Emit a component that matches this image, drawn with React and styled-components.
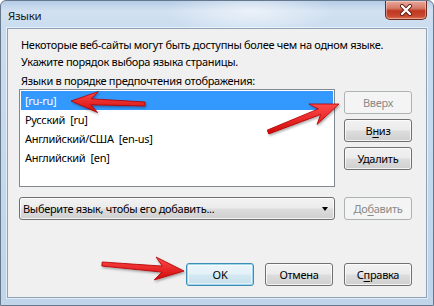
import React from 'react';
import styled, { createGlobalStyle, css } from 'styled-components';

const Global = createGlobalStyle`
  html, body { margin: 0; padding: 0; background: #fff; }
  body {
    width: 434px; height: 306px; overflow: hidden;
    font-family: "Noto Sans", "Open Sans", "DejaVu Sans", sans-serif;
    font-size: 11px;
    letter-spacing: -0.3px;
  }
`;

const Window = styled.div`
  position: relative;
  box-sizing: border-box;
  width: 434px;
  height: 306px;
  border: 1px solid #66788c;
  border-radius: 6px 6px 0 0;
  background:
    radial-gradient(ellipse 120px 40px at 250px 10px, rgba(255,255,255,0.55), rgba(255,255,255,0) 70%),
    linear-gradient(180deg, #b4cce6 0px, #d2e1f1 10px, #cadcef 27px, #c0d5ea 100%);
  display: flex;
  flex-direction: column;
  padding: 0 6px 7px 6px;
`;

const TitleBar = styled.div`
  height: 27px;
  display: flex;
  align-items: flex-start;
  flex-shrink: 0;
`;

const Title = styled.div`
  margin: 7px 0 0 1px;
  font-size: 11.5px;
  line-height: 16px;
  color: #1a1a1a;
`;

const CloseButton = styled.div`
  margin-left: auto;
  width: 42px;
  height: 19px;
  box-sizing: border-box;
  border: 1px solid #6d2a22;
  border-top: none;
  border-radius: 0 0 5px 5px;
  background: linear-gradient(180deg, #e9a99b 0%, #d67a68 40%, #c1371f 55%, #c94a32 85%, #e07a58 100%);
  box-shadow: inset 0 0 0 1px rgba(255,255,255,0.35);
  display: flex;
  align-items: center;
  justify-content: center;
`;

const Panel = styled.div`
  flex: 1;
  display: flex;
  flex-direction: column;
  background: #f0f0f0;
  border: 1px solid #8da1b7;
  box-shadow: 0 0 0 1px rgba(255,255,255,0.55);
  padding: 7px 14px 11px 11px;
  color: #000;
`;

const Description = styled.div`
  line-height: 17px;
  padding-left: 2px;
  white-space: nowrap;
`;

const Label = styled.div`
  margin-top: 2px;
  line-height: 17px;
  padding-left: 2px;
  white-space: nowrap;
`;

const ListRow = styled.div`
  display: flex;
  gap: 9px;
  height: 98px;
`;

const ListBox = styled.div`
  flex: 1;
  box-sizing: border-box;
  background: #fff;
  border: 1px solid #828790;
  padding: 1px;
`;

const ListItem = styled.div`
  height: 19px;
  line-height: 19px;
  padding-left: 4px;
  white-space: pre;
  ${p => p.$selected && css`
    background: #3399ff;
    color: #fff;
  `}
`;

const SideColumn = styled.div`
  width: 68px;
  display: flex;
  flex-direction: column;
  gap: 5px;
  padding-top: 2px;
`;

const Button = styled.div`
  box-sizing: border-box;
  width: 68px;
  height: 23px;
  display: flex;
  align-items: center;
  justify-content: center;
  border: 1px solid #707070;
  border-radius: 3px;
  background: linear-gradient(180deg, #f2f2f2 0%, #ebebeb 48%, #dddddd 52%, #cfcfcf 100%);
  box-shadow: inset 0 0 0 1px rgba(255,255,255,0.75);
  color: #000;
  ${p => p.$disabled && css`
    border-color: #adb2b5;
    background: #f4f4f4;
    box-shadow: none;
    color: #8a8a8a;
  `}
  ${p => p.$default && css`
    border-color: #3c8db5;
    background: linear-gradient(180deg, #eaf6fb 0%, #e3f1f8 48%, #d3e8f2 52%, #c6dfec 100%);
    box-shadow: inset 0 0 0 1px #9fd6ee, inset 0 0 0 2px rgba(255,255,255,0.5);
  `}
`;

const Mnemonic = styled.span`
  text-decoration: underline;
  text-underline-offset: 2px;
`;

const AddRow = styled.div`
  margin-top: 10px;
  display: flex;
  gap: 9px;
  height: 23px;
`;

const Combo = styled.div`
  flex: 1;
  box-sizing: border-box;
  display: flex;
  align-items: center;
  padding: 0 6px 0 3px;
  border: 1px solid #707070;
  border-radius: 3px;
  background: linear-gradient(180deg, #f2f2f2 0%, #ebebeb 48%, #dddddd 52%, #cfcfcf 100%);
  box-shadow: inset 0 0 0 1px rgba(255,255,255,0.75);
`;

const ComboText = styled.span`
  flex: 1;
  white-space: nowrap;
`;

const ComboArrow = styled.span`
  width: 0;
  height: 0;
  border-left: 3.5px solid transparent;
  border-right: 3.5px solid transparent;
  border-top: 4px solid #000;
`;

const Footer = styled.div`
  margin-top: auto;
  display: flex;
  justify-content: flex-end;
  gap: 11px;
`;

const Overlay = styled.svg`
  position: absolute;
  left: -1px;
  top: -1px;
  width: 434px;
  height: 306px;
  pointer-events: none;
`;

function arrowPoints(tx, ty, px, py, tailW, shaftW, headLen, headHalf) {
  const dx = px - tx, dy = py - ty;
  const L = Math.hypot(dx, dy);
  const ux = dx / L, uy = dy / L;
  const nx = -uy, ny = ux;
  const bx = px - ux * headLen, by = py - uy * headLen;
  const p = (x, y) => `${x.toFixed(1)},${y.toFixed(1)}`;
  return [
    p(tx + nx * tailW / 2, ty + ny * tailW / 2),
    p(bx + ux * 4 + nx * shaftW / 2, by + uy * 4 + ny * shaftW / 2),
    p(bx - ux * 3 + nx * headHalf, by - uy * 3 + ny * headHalf),
    p(px, py),
    p(bx - ux * 3 - nx * headHalf, by - uy * 3 - ny * headHalf),
    p(bx + ux * 4 - nx * shaftW / 2, by + uy * 4 - ny * shaftW / 2),
    p(tx - nx * tailW / 2, ty - ny * tailW / 2),
  ].join(' ');
}

const arrows = [
  [145, 104, 71, 101, 4, 6, 24, 10.5],
  [268, 132, 339, 104, 4, 6, 25, 11],
  [102, 264, 184, 271, 4, 6, 26, 11.5],
];

function Arrows() {
  return (
    <Overlay viewBox="0 0 434 306">
      <defs>
        <linearGradient id="ar" x1="0" y1="0" x2="0" y2="1">
          <stop offset="0" stopColor="#ff4a4a" />
          <stop offset="1" stopColor="#d10a0a" />
        </linearGradient>
        <filter id="sh" x="-20%" y="-50%" width="140%" height="200%">
          <feDropShadow dx="1" dy="1.5" stdDeviation="1.2" floodColor="#000" floodOpacity="0.35" />
        </filter>
      </defs>
      {arrows.map((a, i) => (
        <polygon
          key={i}
          points={arrowPoints(...a)}
          fill="url(#ar)"
          stroke="#b00000"
          strokeWidth="0.8"
          strokeLinejoin="round"
          filter="url(#sh)"
        />
      ))}
    </Overlay>
  );
}

const items = ['[ru-ru]', 'Русский  [ru]', 'Английский/США  [en-us]', 'Английский  [en]'];

export default function App() {
  return (
    <>
      <Global />
      <Window>
        <TitleBar>
          <Title>Языки</Title>
          <CloseButton>
            <svg width="14" height="12" viewBox="0 0 14 12">
              <path d="M3 2 L11 10 M11 2 L3 10" stroke="#5a1a10" strokeWidth="4" strokeLinecap="round" />
              <path d="M3 2 L11 10 M11 2 L3 10" stroke="#fff" strokeWidth="2.4" strokeLinecap="round" />
            </svg>
          </CloseButton>
        </TitleBar>
        <Panel>
          <Description>
            Некоторые веб-сайты могут быть доступны более чем на одном языке.<br />
            Укажите порядок выбора языка страницы.
          </Description>
          <Label>Языки в порядке предпочтения отображения:</Label>
          <ListRow>
            <ListBox>
              {items.map((t, i) => (
                <ListItem key={t} $selected={i === 0}>{t}</ListItem>
              ))}
            </ListBox>
            <SideColumn>
              <Button $disabled>Вверх</Button>
              <Button>В<Mnemonic>н</Mnemonic>из</Button>
              <Button>Удалить</Button>
            </SideColumn>
          </ListRow>
          <AddRow>
            <Combo>
              <ComboText>Выберите язык, чтобы его добавить...</ComboText>
              <ComboArrow />
            </Combo>
            <Button $disabled>До<Mnemonic>б</Mnemonic>авить</Button>
          </AddRow>
          <Footer>
            <Button $default>OK</Button>
            <Button>Отмена</Button>
            <Button>С<Mnemonic>п</Mnemonic>равка</Button>
          </Footer>
        </Panel>
        <Arrows />
      </Window>
    </>
  );
}
